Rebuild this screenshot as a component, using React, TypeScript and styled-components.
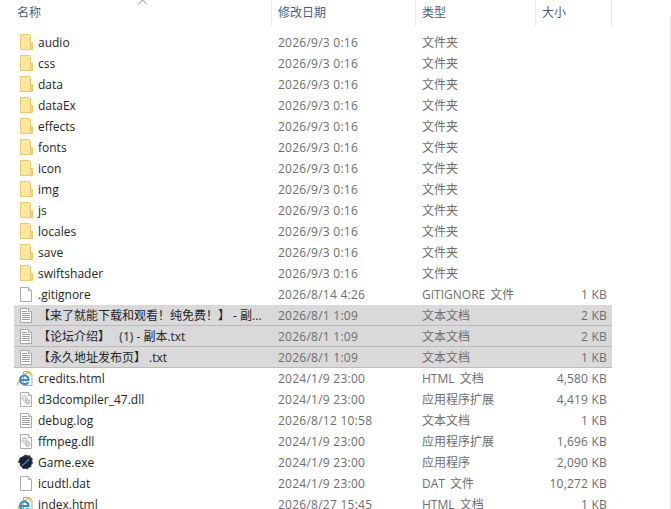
import React from 'react';
import styled, { createGlobalStyle } from 'styled-components';

const GlobalStyle = createGlobalStyle`
  html, body { margin: 0; padding: 0; background: #fff; overflow: hidden; }
  body { font-family: "Open Sans", "Noto Sans CJK SC", sans-serif; font-size: 12px; }
`;

const Page = styled.div`
  position: relative;
  width: 671px;
  height: 509px;
  overflow: hidden;
`;

const ScrollEdge = styled.div`
  position: absolute;
  right: 0;
  top: 16px;
  bottom: 0;
  width: 1px;
  background: #e4e4e4;
`;

const SortCaret = styled.svg`
  position: absolute;
  left: 137px;
  top: 0;
`;

const Columns = `
  display: grid;
  grid-template-columns: 258px 144px 120px 76px;
`;

const Header = styled.div`
  ${Columns}
  height: 26px;
  margin: 0 0 6px 14px;
`;

const HeaderCell = styled.div<{ $pad: number }>`
  height: 26px;
  line-height: 25px;
  padding: 0 0 0 ${p => p.$pad}px;
  color: #4c607a;
  font-size: 12px;
  box-sizing: border-box;
  border-right: 1px solid #e5e5e5;
  white-space: nowrap;
`;

const Row = styled.div<{ $selected?: boolean }>`
  ${Columns}
  height: 21px;
  line-height: 20px;
  margin-left: 14px;
  width: 598px;
  box-sizing: border-box;
  background: ${p => (p.$selected ? '#d9d9d9' : 'transparent')};
  box-shadow: ${p => (p.$selected ? 'inset 0 -1px 0 #bcbcbc' : 'none')};
`;

const NameCell = styled.div`
  display: flex;
  align-items: center;
  gap: 4px;
  padding-left: 3px;
  color: #262626;
  white-space: pre;
  min-width: 0;
`;

const IconSlot = styled.span`
  display: flex;
  width: 17px;
  height: 17px;
  flex: none;
`;

const DateCell = styled.div`
  padding: 1px 0 0 6px;
  color: #6d6d6d;
  letter-spacing: 0.25px;
  white-space: nowrap;
`;

const TypeCell = styled.div`
  padding: 1px 0 0 6px;
  color: #6d6d6d;
  word-spacing: 2px;
  white-space: nowrap;
`;

const SizeCell = styled.div`
  padding: 1px 5px 0 0;
  text-align: right;
  color: #6d6d6d;
  letter-spacing: 0.2px;
  white-space: nowrap;
`;

const FolderIcon = () => (
  <svg width="17" height="17" viewBox="0 0 17 17">
    <path d="M13.5 8.5h2v7h-2z" fill="#f6d67c" stroke="#ecca6a" />
    <path d="M3.5 .5h9l1 1v14h-10z" fill="#fde79d" stroke="#ecca6a" />
  </svg>
);

const BlankIcon = () => (
  <svg width="17" height="17" viewBox="0 0 17 17">
    <path d="M3.5 1.5h8l3 3v11h-11z" fill="#fff" stroke="#a9adb2" />
    <path d="M11.5 1.5v3h3" fill="#eef0f2" stroke="#a9adb2" />
  </svg>
);

const TextIcon = () => (
  <svg width="17" height="17" viewBox="0 0 17 17">
    <path d="M3.5 1.5h8l3 3v11h-11z" fill="#fff" stroke="#a4a8ad" />
    <path d="M11.5 1.5v3h3" fill="#eef0f2" stroke="#a4a8ad" />
    <path d="M5 4.5h5M5 6.5h8M5 8.5h8M5 10.5h8M5 12.5h8" stroke="#9a9ea3" />
  </svg>
);

const DllIcon = () => (
  <svg width="17" height="17" viewBox="0 0 17 17">
    <path d="M3.5 1.5h8l3 3v11h-11z" fill="#fff" stroke="#a9adb2" />
    <path d="M11.5 1.5v3h3" fill="#eef0f2" stroke="#a9adb2" />
    <circle cx="7.5" cy="7" r="2.4" fill="#dfe3e8" stroke="#98a2ad" strokeDasharray="1.2 .7" />
    <circle cx="10.5" cy="11" r="2.4" fill="#cfd5dc" stroke="#98a2ad" strokeDasharray="1.2 .7" />
  </svg>
);

const HtmlIcon = () => (
  <svg width="17" height="17" viewBox="0 0 17 17">
    <path d="M6.5 1.5h5.5l3 3v11h-8.5z" fill="#fff" stroke="#a9adb2" />
    <path d="M1 15.5c-.8-1.6 1-5.4 4.2-8.6 3-3 6.8-5 8.2-4.2.8.5.3 1.8-.6 2.9" fill="none" stroke="#e6ae2b" strokeWidth="1.1" />
    <path
      d="M3.5 10h8C11.5 7.2 9.6 5.5 7.5 5.5 5 5.5 3.2 7.5 3.2 10c0 2.5 1.9 4.2 4.3 4.2 1.6 0 3-.7 3.7-2"
      fill="none"
      stroke="#2b8ade"
      strokeWidth="2.2"
    />
  </svg>
);

const GameIcon = () => (
  <svg width="17" height="17" viewBox="0 0 17 17">
    <path
      d="M8.5 .5l2 1 2.4-.3 1 2 1.8 1.4-.5 2.3.8 2-1.5 1.8-.3 2.4-2.3.7-1.6 1.8-2.1-.9-2.3.3-1.2-2-2-1.2.3-2.4L.6 8l1.5-1.8L2.3 3.8l2.3-.8z"
      fill="#2b333d"
    />
    <circle cx="8.5" cy="8.5" r="5.6" fill="#17212e" />
    <path d="M4.5 11.5C7 10.5 9.5 8 12 5" fill="none" stroke="#3f87d6" strokeWidth="1.3" />
  </svg>
);

type Kind = 'folder' | 'blank' | 'text' | 'dll' | 'html' | 'game';

const icons: Record<Kind, React.FC> = {
  folder: FolderIcon,
  blank: BlankIcon,
  text: TextIcon,
  dll: DllIcon,
  html: HtmlIcon,
  game: GameIcon,
};

interface FileRow {
  name: string;
  date: string;
  type: string;
  size?: string;
  kind: Kind;
  selected?: boolean;
}

const folder = (name: string): FileRow => ({ name, date: '2026/9/3 0:16', type: '文件夹', kind: 'folder' });

const rows: FileRow[] = [
  ...['audio', 'css', 'data', 'dataEx', 'effects', 'fonts', 'icon', 'img', 'js', 'locales', 'save', 'swiftshader'].map(folder),
  { name: '.gitignore', date: '2026/8/14 4:26', type: 'GITIGNORE 文件', size: '1 KB', kind: 'blank' },
  { name: '【来了就能下载和观看！纯免费！】 - 副...', date: '2026/8/1 1:09', type: '文本文档', size: '2 KB', kind: 'text', selected: true },
  { name: '【论坛介绍】   (1) - 副本.txt', date: '2026/8/1 1:09', type: '文本文档', size: '2 KB', kind: 'text', selected: true },
  { name: '【永久地址发布页】 .txt', date: '2026/8/1 1:09', type: '文本文档', size: '1 KB', kind: 'text', selected: true },
  { name: 'credits.html', date: '2024/1/9 23:00', type: 'HTML 文档', size: '4,580 KB', kind: 'html' },
  { name: 'd3dcompiler_47.dll', date: '2024/1/9 23:00', type: '应用程序扩展', size: '4,419 KB', kind: 'dll' },
  { name: 'debug.log', date: '2026/8/12 10:58', type: '文本文档', size: '1 KB', kind: 'text' },
  { name: 'ffmpeg.dll', date: '2024/1/9 23:00', type: '应用程序扩展', size: '1,696 KB', kind: 'dll' },
  { name: 'Game.exe', date: '2024/1/9 23:00', type: '应用程序', size: '2,090 KB', kind: 'game' },
  { name: 'icudtl.dat', date: '2024/1/9 23:00', type: 'DAT 文件', size: '10,272 KB', kind: 'blank' },
  { name: 'index.html', date: '2026/8/27 15:45', type: 'HTML 文档', size: '1 KB', kind: 'html' },
];

export default function App() {
  return (
    <Page>
      <GlobalStyle />
      <SortCaret width="11" height="5" viewBox="0 0 11 5">
        <path d="M1 4.5L5.5 0L10 4.5" fill="none" stroke="#8a8a8a" />
      </SortCaret>
      <Header>
        <HeaderCell $pad={3}>名称</HeaderCell>
        <HeaderCell $pad={6}>修改日期</HeaderCell>
        <HeaderCell $pad={6}>类型</HeaderCell>
        <HeaderCell $pad={6}>大小</HeaderCell>
      </Header>
      {rows.map(r => {
        const Icon = icons[r.kind];
        return (
          <Row key={r.name} $selected={r.selected}>
            <NameCell>
              <IconSlot><Icon /></IconSlot>
              {r.name}
            </NameCell>
            <DateCell>{r.date}</DateCell>
            <TypeCell>{r.type}</TypeCell>
            <SizeCell>{r.size}</SizeCell>
          </Row>
        );
      })}
      <ScrollEdge />
    </Page>
  );
}
